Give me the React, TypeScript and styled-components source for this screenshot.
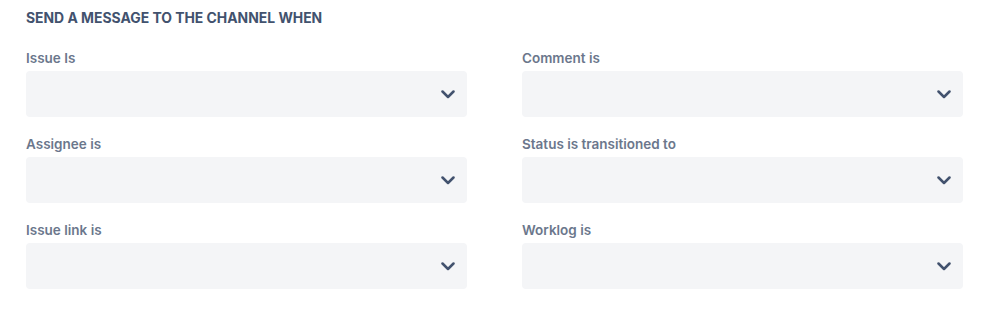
import React from 'react'
import styled, { createGlobalStyle } from 'styled-components'

const GlobalStyle = createGlobalStyle`
    body {
        margin: 0;
        background: #ffffff;
        font-family: Inter, "Noto Sans", sans-serif;
    }
`

const fields = [
    'Issue Is',
    'Comment is',
    'Assignee is',
    'Status is transitioned to',
    'Issue link is',
    'Worklog is',
]

const Chevron = () => (
    <svg width="14" height="9" viewBox="0 0 14 9" fill="none">
        <path d="M1.5 1.5L7 7L12.5 1.5" stroke="#42526E" strokeWidth="2.5" strokeLinecap="round" strokeLinejoin="round" />
    </svg>
)

const App = () => {
  return (
    <Container>
        <GlobalStyle />
        <Title>Send a message to the channel when</Title>
        <Grid>
            {fields.map((f) => (
                <Field key={f}>
                    <Label>{f}</Label>
                    <Select>
                        <Chevron />
                    </Select>
                </Field>
            ))}
        </Grid>
    </Container>
  )
}

export default App

const Container = styled.div`
    width: 999px;
    height: 319px;
    box-sizing: border-box;
    padding: 8px 36px 0 26px;
`

const Title = styled.h2`
    margin: 0;
    font-size: 13.9px;
    line-height: 20px;
    font-weight: 700;
    text-transform: uppercase;
    color: #42526E;
`

const Grid = styled.div`
    display: grid;
    grid-template-columns: 441px 441px;
    column-gap: 55px;
    row-gap: 19px;
    margin-top: 22px;
`

const Field = styled.div`
    display: flex;
    flex-direction: column;
`

const Label = styled.div`
    font-size: 13.5px;
    line-height: 16px;
    font-weight: 600;
    color: #6B778C;
    margin-bottom: 5px;
`

const Select = styled.div`
    height: 46px;
    border-radius: 4px;
    background-color: #F4F5F7;
    display: flex;
    align-items: center;
    justify-content: flex-end;
    padding-right: 12px;
`
